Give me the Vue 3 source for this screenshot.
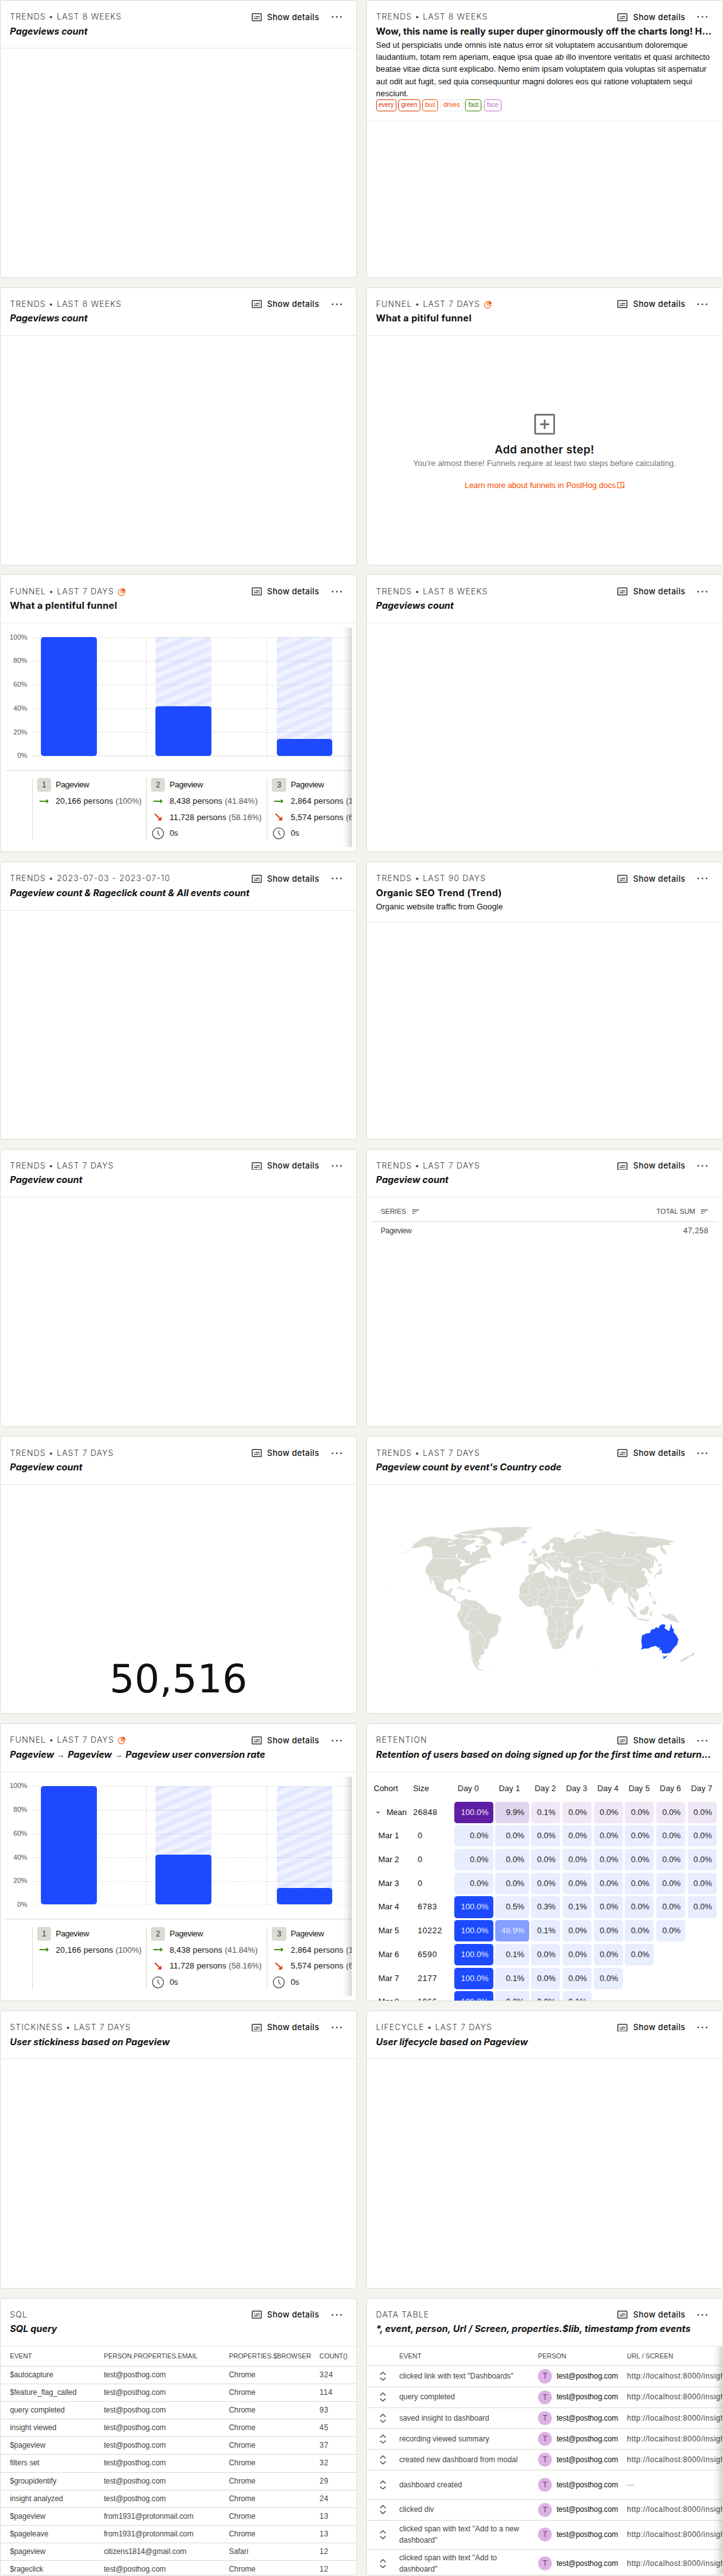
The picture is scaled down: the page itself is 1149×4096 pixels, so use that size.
<script setup>
const T7 = 'Trends • Last 7 days'
const T8 = 'Trends • Last 8 weeks'

const cards = [
  { kind: T8, title: 'Pageviews count', auto: true },
  {
    kind: T8,
    title: 'Wow, this name is really super duper ginormously off the charts long! H...',
    long: true,
    desc: [
      'Sed ut perspiciatis unde omnis iste natus error sit voluptatem accusantium doloremque',
      'laudantium, totam rem aperiam, eaque ipsa quae ab illo inventore veritatis et quasi architecto',
      'beatae vitae dicta sunt explicabo. Nemo enim ipsam voluptatem quia voluptas sit aspernatur',
      'aut odit aut fugit, sed quia consequuntur magni dolores eos qui ratione voluptatem sequi',
      'nesciunt.'
    ],
    tags: [
      { text: 'every', tone: 'danger', w: 35 },
      { text: 'green', tone: 'danger', w: 37 },
      { text: 'bus', tone: 'orange', w: 27 },
      { text: 'drives', tone: 'plain', w: 39 },
      { text: 'fast', tone: 'success', w: 28 },
      { text: 'face', tone: 'purple', w: 31 }
    ]
  },
  { kind: T8, title: 'Pageviews count', auto: true },
  { kind: 'Funnel • Last 7 days', pie: true, title: 'What a pitiful funnel', body: 'empty' },
  { kind: 'Funnel • Last 7 days', pie: true, title: 'What a plentiful funnel', body: 'funnel' },
  { kind: T8, title: 'Pageviews count', auto: true },
  { kind: 'Trends • 2023-07-03 - 2023-07-10', title: 'Pageview count & Rageclick count & All events count', auto: true },
  { kind: 'Trends • Last 90 days', title: 'Organic SEO Trend (Trend)', desc: ['Organic website traffic from Google'] },
  { kind: T7, title: 'Pageview count', auto: true },
  { kind: T7, title: 'Pageview count', auto: true, body: 'series' },
  { kind: T7, title: 'Pageview count', auto: true, body: 'number' },
  { kind: T7, title: "Pageview count by event's Country code", auto: true, body: 'map' },
  { kind: 'Funnel • Last 7 days', pie: true, title: 'Pageview → Pageview → Pageview user conversion rate', auto: true, body: 'funnel' },
  { kind: 'Retention', title: 'Retention of users based on doing signed up for the first time and return...', auto: true, body: 'retention' },
  { kind: 'Stickiness • Last 7 days', title: 'User stickiness based on Pageview', auto: true },
  { kind: 'Lifecycle • Last 7 days', title: 'User lifecycle based on Pageview', auto: true },
  { kind: 'SQL', title: 'SQL query', auto: true, body: 'sql' },
  { kind: 'Data table', title: '*, event, person, Url / Screen, properties.$lib, timestamp from events', auto: true, long: true, body: 'data' }
]
// Keeps the arrows as separate parts so they can be set upright and light.
const parts = (title) => title.split(/(→)/)

const ticks = ['100%', '80%', '60%', '40%', '20%', '0%']
const steps = [
  { n: 1, w: 196.5, share: 100, ok: '20,166 persons', okPct: '(100%)' },
  { n: 2, w: 209, share: 41.84, ok: '8,438 persons', okPct: '(41.84%)', lost: '11,728 persons', lostPct: '(58.16%)' },
  { n: 3, w: 209, share: 14.2, ok: '2,864 persons', okPct: '(14.20%)', lost: '5,574 persons', lostPct: '(66.06%)' }
]

const days = [0, 1, 2, 3, 4, 5, 6, 7]
const z = '0.0%'
const cohorts = [
  { name: 'Mean', size: '26848', mean: true, v: ['100.0%', '9.9%', '0.1%', z, z, z, z, z] },
  { name: 'Mar 1', size: '0', v: [z, z, z, z, z, z, z, z] },
  { name: 'Mar 2', size: '0', v: [z, z, z, z, z, z, z, z] },
  { name: 'Mar 3', size: '0', v: [z, z, z, z, z, z, z, z] },
  { name: 'Mar 4', size: '6783', v: ['100.0%', '0.5%', '0.3%', '0.1%', z, z, z, z] },
  { name: 'Mar 5', size: '10222', v: ['100.0%', '48.9%', '0.1%', z, z, z, z] },
  { name: 'Mar 6', size: '6590', v: ['100.0%', '0.1%', z, z, z, z] },
  { name: 'Mar 7', size: '2177', v: ['100.0%', '0.1%', z, z, z] },
  { name: 'Mar 8', size: '1066', v: ['100.0%', z, z, '0.1%'] }
]
const tone = (v, mean) => {
  const n = parseFloat(v)
  const level = n >= 99 ? 'full' : n > 40 ? 'mid' : n > 5 ? 'low' : 'none'
  return (mean ? 'mean-' : 'cell-') + level
}

const sqlRows = [
  ['$autocapture', 'test@posthog.com', 'Chrome', '324'],
  ['$feature_flag_called', 'test@posthog.com', 'Chrome', '114'],
  ['query completed', 'test@posthog.com', 'Chrome', '93'],
  ['insight viewed', 'test@posthog.com', 'Chrome', '45'],
  ['$pageview', 'test@posthog.com', 'Chrome', '37'],
  ['filters set', 'test@posthog.com', 'Chrome', '32'],
  ['$groupidentify', 'test@posthog.com', 'Chrome', '29'],
  ['insight analyzed', 'test@posthog.com', 'Chrome', '24'],
  ['$pageview', 'from1931@protonmail.com', 'Chrome', '13'],
  ['$pageleave', 'from1931@protonmail.com', 'Chrome', '13'],
  ['$pageview', 'citizens1814@gmail.com', 'Safari', '12'],
  ['$rageclick', 'test@posthog.com', 'Chrome', '12']
]

const url = 'http://localhost:8000/insights'
const events = [
  { name: ['clicked link with text "Dashboards"'], url },
  { name: ['query completed'], url },
  { name: ['saved insight to dashboard'], url },
  { name: ['recording viewed summary'], url },
  { name: ['created new dashboard from modal'], url },
  { name: ['dashboard created'], tall: true },
  { name: ['clicked div'], url },
  { name: ['clicked span with text "Add to a new', 'dashboard"'], tall: true, url },
  { name: ['clicked span with text "Add to', 'dashboard"'], tall: true, url }
]

const land = [
  // North America
  'M294 77L264 71L230 73L202 82L192 90L210 93L176 96L186 101L158 110L168 114L150 125L172 130L196 122L222 116L244 124L258 132L256 150L262 178L256 190L242 204L230 226L224 240L226 262L238 272L244 292L252 314L258 326L252 300L248 280L262 296L276 322L278 340L296 358L322 366L342 378L362 388L372 402L390 412L404 414L400 408L388 410L378 398L376 378L356 372L352 362L364 340L350 342L342 354L324 352L314 334L320 304L336 290L362 292L374 286L392 292L398 314L404 308L402 284L412 272L436 256L438 242L452 232L470 222L486 214L512 206L540 198L536 192L506 200L500 192L512 182L540 178L562 182L556 160L544 152L542 126L524 114L508 118L506 136L490 138L484 150L468 148L462 164L452 170L454 150L432 140L420 132L436 114L460 108L484 94L470 84L452 92L440 82L420 86L396 80L368 88L340 80L318 80Z',
  'M370 62L400 56L424 66L436 78L404 80L376 72Z',
  'M420 66L448 60L480 64L500 74L478 78L446 78Z',
  'M500 66L532 72L560 90L566 102L552 106L536 116L520 104L502 104L528 94L504 80Z',
  'M398 50L440 42L500 34L560 26L600 24L560 32L520 44L470 54L430 56Z',
  'M448 52L500 46L530 50L500 60L470 60Z',
  'M486 116L500 118L498 126L484 126Z',
  // Greenland
  'M540 32L596 24L650 22L704 20L770 24L742 32L750 44L730 58L736 66L700 78L718 80L684 92L658 98L634 108L624 120L612 112L608 100L620 84L618 66L604 48L578 44Z',
  // Caribbean
  'M382 338L400 330L422 342L430 346L412 344L396 336Z',
  'M436 348L446 346L464 354L446 356Z',
  // South America
  'M404 414L412 402L436 392L444 400L486 404L500 418L522 430L534 446L544 464L566 472L590 474L612 486L616 500L600 526L598 560L588 584L566 592L556 606L552 626L540 652L520 654L528 668L522 680L506 684L508 698L496 712L502 728L492 742L500 756L526 766L500 760L480 744L468 720L460 690L456 650L450 600L448 560L424 544L410 526L396 498L386 484L390 462L406 446Z',
  // Africa
  'M766 262L800 258L836 248L844 262L842 272L874 286L884 288L890 274L912 276L950 288L962 308L976 346L990 376L1004 398L1044 392L1036 420L1012 448L992 472L984 492L986 520L990 544L964 566L962 596L946 612L944 628L924 648L884 654L874 632L862 596L850 556L860 526L856 490L838 472L836 444L828 436L808 424L780 430L752 434L728 412L712 392L706 376L712 360L710 336L720 316L736 300L744 280Z',
  'M1036 528L1038 544L1026 574L1018 600L1006 600L1002 580L1010 552Z',
  // Eurasia
  'M766 262L754 248L756 214L790 216L802 212L796 200L778 186L794 184L816 176L830 162L846 158L862 156L888 152L900 136L882 140L880 124L890 110L874 98L864 110L868 130L856 142L846 138L840 132L826 134L828 120L848 106L870 86L896 72L912 74L950 88L930 92L948 104L940 110L956 100L990 84L1036 80L1060 90L1040 66L1070 68L1096 58L1130 48L1170 44L1200 58L1250 62L1290 70L1340 68L1400 76L1460 84L1510 98L1480 102L1492 112L1456 114L1444 122L1462 140L1470 168L1454 154L1440 136L1438 112L1412 126L1370 128L1362 152L1390 164L1406 180L1404 214L1396 232L1376 238L1386 246L1394 262L1380 256L1370 240L1350 230L1338 244L1362 250L1354 268L1372 292L1370 316L1350 330L1318 340L1312 352L1326 372L1328 392L1312 406L1300 390L1284 380L1280 402L1296 420L1306 448L1292 436L1276 404L1272 374L1266 358L1254 364L1246 342L1228 330L1210 346L1190 368L1186 398L1176 412L1162 388L1150 358L1146 340L1130 328L1110 312L1092 316L1070 312L1042 302L1028 288L1038 308L1058 322L1064 312L1082 334L1064 360L1034 378L1006 386L992 354L974 322L960 296L964 274L962 256L932 256L916 238L924 228L910 234L908 244L898 254L888 238L870 218L850 200L838 204L866 232L862 246L856 230L826 208L802 220L790 244Z',
  // Middle East and Caucasus
  'M918 230L950 226L990 224L1006 232L1000 254L960 258L924 250Z',
  // Britain and Ireland
  'M776 134L790 138L790 150L804 164L798 174L778 174L786 162L776 150Z',
  'M762 156L774 152L772 166L758 168Z',
  // Arctic islands
  'M990 66L1006 52L1030 46L1010 54L998 64L1004 72L996 74Z',
  'M1096 30L1130 36L1146 42L1120 42Z',
  'M1266 50L1310 52L1290 54Z',
  // Japan and Sakhalin
  'M1404 164L1420 188L1430 214L1412 190Z',
  'M1428 214L1448 214L1438 224L1430 226Z',
  'M1438 232L1448 250L1444 262L1420 266L1412 272L1416 262L1436 250Z',
  'M1410 272L1418 278L1412 280Z',
  // South-East Asia
  'M1264 428L1284 444L1312 472L1318 490L1300 484L1284 460Z',
  'M1314 494L1346 496L1382 504L1376 508L1334 502Z',
  'M1332 456L1352 446L1368 428L1380 440L1370 472L1350 476L1336 470Z',
  'M1384 462L1404 454L1390 466L1398 482L1386 478Z',
  'M1382 354L1392 366L1390 380L1382 368Z',
  'M1398 404L1414 406L1416 424L1402 416Z',
  'M1448 468L1468 480L1490 468L1520 490L1534 516L1500 506L1466 490L1454 482Z',
  'M1188 406L1196 418L1190 424Z',
  'M1376 320L1380 318L1378 332Z',
  // New Zealand
  'M1540 718L1556 704L1590 684L1588 694L1556 716Z',
  'M1594 688L1606 672L1618 672L1604 690Z'
]
const borders = [
  'M296 77L246 124M262 184H392L414 196',
  'M238 274L262 280L290 278L312 300L318 308M340 370L354 360M356 378L374 376',
  'M418 402L416 420L450 430L460 450L440 456L444 484L424 494L430 516L450 518L466 516L490 546L506 556L510 576L528 598L526 620L542 640M504 430L500 446L480 448L462 446M390 458L414 460L400 486L388 488M450 518L450 546L462 584L454 600L462 690L490 744M462 584L484 584L490 570L510 568M510 582L530 606M526 622L520 640L524 656',
  'M766 262L784 266L756 294L730 304M756 294L812 350L864 330L840 300L838 250M760 318L764 370L712 374M812 350L804 374L772 386L748 404M864 330L868 356L856 384L810 384L804 420M912 276L912 346L868 330M912 334H966M904 344L900 400L880 420L862 444L840 444M908 400L956 404L970 366L984 362M970 366L986 380L1028 410L996 438L960 436L946 404M900 400L926 432L960 436L946 460L940 494M996 438L994 466L984 480M864 432H906L940 440M880 432L872 474L852 490M874 492L900 500L902 552L930 556L952 544L932 506L940 494L964 512L986 522M850 556L900 558M902 558L890 616L866 618M890 600L920 602L948 586L962 566M920 626L930 620L934 628L924 632ZM780 400L780 430M794 400L800 426M838 470L862 472L860 448',
  'M1002 186L1000 176L1050 174L1056 158L1090 150L1130 152L1170 182L1184 178L1220 184L1260 180L1308 184L1314 160L1352 174L1388 190L1392 230M1174 184L1204 210L1260 220L1300 218L1330 196L1308 184M1170 182L1160 214L1130 220L1140 238L1154 252L1160 276L1190 298L1240 304L1256 296L1270 330L1286 342L1300 334L1312 340M1048 204L1080 214L1130 238L1112 254L1096 234L1050 220M1004 236L1050 250L1080 256L1086 300L1092 312M1080 256L1110 250L1148 248L1130 300L1110 310M1140 262L1150 284L1136 320M1190 298L1230 310L1228 330M1268 336L1272 380M1286 342L1300 366L1322 376M1300 366L1286 378',
  'M962 280L980 250L1006 252M980 254L1000 280L1022 292M960 296L984 284M1004 374L1010 362L1056 354L1062 336M984 362L1010 362',
  'M900 72L910 100L906 116M868 92L850 120M860 156L866 176L896 178L902 154M902 154L936 150L926 170L968 182L960 200M896 178L920 170M830 162L820 184L830 196L866 186L896 190L916 194L920 212L894 214L888 198M850 176L852 190M866 200L886 214L888 236M760 222L758 246',
  'M1492 470L1492 508'
]
const australia =
  'M1338 656L1344 640L1340 612L1344 582L1366 572L1384 570L1392 552L1410 548L1416 538L1430 546L1434 532L1450 524L1466 528L1460 544L1484 560L1490 542L1495 520L1500 544L1508 550L1508 568L1520 580L1532 602L1526 628L1506 650L1490 672L1466 676L1448 674L1444 656L1432 660L1438 644L1428 646L1416 636L1392 642L1376 650L1356 650Z'
</script>

<template>
  <main class="dashboard">
    <article v-for="(c, i) in cards" :key="i" class="card">
      <header class="meta">
        <div class="meta-top">
          <h5>{{ c.kind }}</h5>
          <svg v-if="c.pie" class="pie" viewBox="0 0 14 14">
            <path d="M6.3 1.7A5.6 5.6 0 1 0 12.3 7.9H6.3Z" fill="none" stroke="currentColor" stroke-width="1.2" />
            <path d="M8 .4A6 6 0 0 1 13.7 6.1H8Z" fill="currentColor" />
          </svg>
          <div class="controls">
            <svg class="details" viewBox="0 0 18 14">
              <rect x=".9" y=".9" width="15.8" height="12.2" rx="1" fill="none" stroke="currentColor" stroke-width="1.7" />
              <path d="M4 6H5.4M6.8 6H13.8M4 9.3H10.8M12.2 9.3H13.8" stroke="currentColor" stroke-width="1.5" />
            </svg>
            <span class="show">Show details</span>
            <svg class="dots" viewBox="0 0 18 4">
              <circle cx="1.7" cy="2" r="1.45" /><circle cx="9" cy="2" r="1.45" /><circle cx="16.2" cy="2" r="1.45" />
            </svg>
          </div>
        </div>
        <h4 :class="{ auto: c.auto, long: c.long }"><template v-for="(p, j) in parts(c.title)" :key="j"><span v-if="p === '→'" class="arrow">{{ p }}</span><template v-else>{{ p }}</template></template></h4>
        <div v-if="c.desc" class="desc">
          <div v-for="line in c.desc" :key="line">{{ line }}</div>
        </div>
        <div v-if="c.tags" class="tags">
          <span v-for="t in c.tags" :key="t.text" class="tag" :class="t.tone" :style="{ width: t.w + 'px' }">{{ t.text }}</span>
        </div>
      </header>

      <section v-if="c.body === 'empty'" class="empty">
        <svg viewBox="0 0 36 36" class="plus">
          <rect x="1.5" y="1.5" width="33" height="33" rx="1.5" fill="none" stroke="currentColor" stroke-width="3" />
          <path d="M18 10V26M10 18H26" stroke="currentColor" stroke-width="3" />
        </svg>
        <h2>Add another step!</h2>
        <p>You're almost there! Funnels require at least two steps before calculating.</p>
        <a>
          <span>Learn more about funnels in PostHog docs</span>
          <svg viewBox="0 0 12 12"><path d="M7 10.6H.6V1H11.4V6M6.4 1V10.6M11.6 7.4V11M11.6 7.6H9M11.4 7.8L8.2 11" fill="none" stroke="currentColor" stroke-width="1.1" /></svg>
        </a>
      </section>

      <section v-else-if="c.body === 'funnel'" class="funnel">
        <div class="chart">
          <div class="axis"><span v-for="t in ticks" :key="t">{{ t }}</span></div>
          <div class="plot">
            <div v-for="s in steps" :key="s.n" class="col" :style="{ width: s.w + 'px' }">
              <div class="bar"><div class="fill" :style="{ height: s.share + '%' }"></div></div>
            </div>
            <svg class="grid" width="552" height="206" viewBox="0 0 552 206">
              <path v-for="k in 5" :key="k" :d="`M0 ${(k - 1) * 41 + 0.5}H552`" stroke-dasharray="3 2" />
              <path d="M0 205.5H552" />
            </svg>
          </div>
        </div>
        <div class="legend">
          <div v-for="s in steps" :key="s.n" class="step" :style="{ width: s.w + 'px' }">
            <div class="line"><span class="badge">{{ s.n }}</span><span class="step-name">Pageview</span></div>
            <div class="line">
              <svg class="ico green" viewBox="0 0 24 24"><path d="M4 12H17" stroke="currentColor" stroke-width="2" /><path d="M16 8L20 12L16 16Z" fill="currentColor" /></svg>
              <span class="persons">{{ s.ok }} <i>{{ s.okPct }}</i></span>
            </div>
            <div v-if="s.lost" class="line">
              <svg class="ico red" viewBox="0 0 24 24"><path d="M6.5 6.5L15 15" stroke="currentColor" stroke-width="2" /><path d="M18 11V18H11Z" fill="currentColor" /></svg>
              <span class="persons">{{ s.lost }} <i>{{ s.lostPct }}</i></span>
            </div>
            <div v-if="s.lost" class="line">
              <svg class="ico" viewBox="0 0 24 24" fill="none" stroke="currentColor" stroke-width="1.3"><circle cx="12" cy="12" r="9.5" /><path d="M12 7V12L15 15.5" /></svg>
              <span>0s</span>
            </div>
          </div>
        </div>
        <div class="shade"></div>
      </section>

      <section v-else-if="c.body === 'series'" class="series">
        <div class="series-head">
          <span>Series</span>
          <svg viewBox="0 0 12 8"><path d="M0 1H12M0 4H8M0 7H4" stroke="currentColor" stroke-width="1.2" /></svg>
          <span class="right">Total sum</span>
          <svg viewBox="0 0 12 8"><path d="M0 1H12M0 4H8M0 7H4" stroke="currentColor" stroke-width="1.2" /></svg>
        </div>
        <div class="series-row"><span class="event-name">Pageview</span><span class="count">47,258</span></div>
      </section>

      <section v-else-if="c.body === 'number'" class="number">50,516</section>

      <section v-else-if="c.body === 'map'" class="map">
        <svg viewBox="-81 -198 1842 1185">
          <path v-for="d in land" :key="d" :d="d" fill="#dadcd3" stroke="#dadcd3" stroke-width="2" stroke-linejoin="round" />
          <g fill="#fff">
            <path d="M336 96L362 90L366 96L342 102ZM338 118L380 110L384 114L346 124ZM384 158L390 156L386 180L378 172Z" />
            <path d="M390 184L424 194L436 214L412 224L396 224L410 204ZM428 212L460 206L450 216L426 222Z" />
            <path d="M924 208L930 194L944 208L962 206L982 218L970 228L936 230L922 222Z" />
            <path d="M1008 198L1026 192L1032 204L1022 212L1042 232L1034 250L1018 244L1020 222Z" />
            <path d="M1120 200L1128 194L1150 196L1128 204ZM1250 146L1258 150L1252 170L1238 172L1252 160Z" />
            <path d="M948 460L962 456L962 470L950 472Z" />
          </g>
          <path v-for="d in borders" :key="d" :d="d" fill="none" stroke="#f8f9f6" stroke-width="2.5" stroke-linejoin="round" />
          <path d="M718 98L730 94L748 96L746 102L732 106L720 104Z" fill="#d2dbff" />
          <path :d="australia" fill="#1d4aff" />
          <path d="M1454 690L1462 692L1476 684L1468 696L1454 704Z" fill="#1d4aff" />
          <path d="M94 158L124 148L160 132M12 334L20 336M28 346h4v3h-4zM1100 736h6M542 748h10M1384 380L1402 390L1412 404" stroke="#dadcd3" stroke-width="2" fill="none" />
        </svg>
      </section>

      <section v-else-if="c.body === 'retention'" class="retention">
        <div class="ret-row ret-head">
          <span class="name">Cohort</span><span class="size">Size</span>
          <span v-for="d in days" :key="d" class="cell">Day {{ d }}</span>
        </div>
        <div v-for="r in cohorts" :key="r.name" class="ret-row" :class="{ mean: r.mean }">
          <span class="name">
            <svg v-if="r.mean" viewBox="0 0 6 4"><path d="M.4 .5L3 3.2L5.6 .5" fill="none" stroke="currentColor" stroke-width="1.1" /></svg>{{ r.name }}
          </span>
          <span class="size digits">{{ r.size }}</span>
          <span v-for="(v, k) in r.v" :key="k" class="cell" :class="tone(v, r.mean)">{{ v }}</span>
        </div>
      </section>

      <section v-else-if="c.body === 'sql'" class="sql">
        <div class="sql-row sql-head"><span>Event</span><span>Person.properties.email</span><span>Properties.$browser</span><span>Count()</span></div>
        <div v-for="(r, k) in sqlRows" :key="k" class="sql-row"><span v-for="(v, j) in r" :key="j" :class="{ count: j === 3 }">{{ v }}</span></div>
      </section>

      <section v-else-if="c.body === 'data'" class="data">
        <div class="data-row data-head"><span></span><span>Event</span><span>Person</span><span>URL / Screen</span></div>
        <div v-for="(e, k) in events" :key="k" class="data-row" :class="{ tall: e.tall }">
          <svg viewBox="0 0 12 16"><path d="M1.2 5.5L6 1L10.8 5.5M1.2 10.5L6 15L10.8 10.5" fill="none" stroke="currentColor" stroke-width="1.4" /></svg>
          <div class="event"><div v-for="n in e.name" :key="n">{{ n }}</div></div>
          <div class="person"><b>T</b><span>test@posthog.com</span></div>
          <span v-if="e.url" class="url">{{ e.url }}</span><span v-else class="dash">—</span>
        </div>
        <div class="shade"></div>
      </section>
    </article>
  </main>
</template>

<style>
html,
body {
  margin: 0;
  background: #f3f4ef;
  overflow: hidden;
}
</style>

<style scoped>
.dashboard {
  zoom: 0.9208;
  width: 1247.8px;
  display: grid;
  grid-template-columns: 1fr 1fr;
  grid-auto-rows: 480px;
  gap: 16px;
  background: #f3f4ef;
  color: #111;
  font: 14px/21px 'Liberation Sans', Arial, sans-serif;
}
.card {
  box-sizing: border-box;
  min-width: 0;
  display: flex;
  flex-direction: column;
  position: relative;
  border: 1px solid #dadcd3;
  border-radius: 5px;
  background: #fff;
  overflow: hidden;
}
.meta {
  flex: none;
  padding: 16px;
  border-bottom: 1px solid #e5e7e6;
}
.meta-top {
  display: flex;
  align-items: center;
  height: 25px;
}
h5 {
  margin: 0;
  font: 300 14px/24px Inter, sans-serif;
  letter-spacing: 1.06px;
  text-transform: uppercase;
  color: #3a3a3a;
}
.pie {
  width: 14px;
  height: 14px;
  margin: 1px 0 0 6px;
  color: #f54e00;
}
.controls {
  display: flex;
  align-items: center;
  margin-left: auto;
  margin-right: 9px;
  color: #3d3d3d;
}
.details {
  width: 18px;
  height: 14px;
}
.show {
  margin: 1px 21px 0 9px;
  font: 500 14px/24px Inter, sans-serif;
  letter-spacing: 0.39px;
  color: #111;
}
.dots {
  width: 18px;
  height: 4px;
  fill: #3d3d3d;
}
h4 {
  margin: 0;
  font: 700 16px/25px Inter, sans-serif;
  letter-spacing: 0.35px;
  color: #111;
  white-space: nowrap;
}
h4.auto {
  font-style: italic;
  letter-spacing: 0;
}
h4.long {
  letter-spacing: 0.1px;
}
.arrow {
  display: inline-block;
  width: 16px;
  text-align: center;
  font: 400 14px/20px 'Liberation Sans', sans-serif;
}
.desc {
  white-space: nowrap;
}
.tags {
  display: flex;
  gap: 4px;
}
.tag {
  box-sizing: border-box;
  height: 20px;
  border: 1px solid currentColor;
  border-radius: 4px;
  text-align: center;
  font-size: 11px;
  line-height: 18px;
  letter-spacing: -0.1px;
}
.danger { color: #db3707; }
.orange { color: #f54e00; }
.plain { color: #f54e00; border-color: #e5e7eb; }
.success { color: #388600; }
.purple { color: #c278cf; }

.empty {
  display: flex;
  flex-direction: column;
  align-items: center;
  padding-top: 134px;
}
.plus {
  width: 36px;
  height: 36px;
  color: #707070;
}
.empty h2 {
  margin: 15px 0 0;
  font: 600 19px/24px Inter, sans-serif;
  letter-spacing: 0.45px;
}
.empty p {
  margin: 1px 0 16px;
  color: #757575;
}
.empty a {
  display: flex;
  align-items: center;
  gap: 3px;
  letter-spacing: -0.1px;
  color: #f54e00;
}
.empty a svg {
  width: 12px;
  height: 12px;
}

.funnel {
  position: relative;
  margin: 8px;
  height: 379px;
  overflow: hidden;
}
.chart {
  display: flex;
  height: 246px;
  border-bottom: 1px solid #dadcd3;
}
.axis {
  flex: none;
  width: 38px;
  margin-right: 8px;
  padding-top: 6px;
  text-align: right;
  font-size: 12px;
  color: #555;
}
.axis span {
  display: block;
  height: 41px;
  line-height: 20px;
}
.plot {
  position: relative;
  display: flex;
  flex: none;
  margin-top: 16px;
  height: 206px;
}
.grid {
  position: absolute;
  top: 0;
  left: 0;
  fill: none;
  stroke: #1e2300;
  stroke-opacity: 0.16;
  z-index: 1;
}
.col {
  box-sizing: border-box;
  flex: none;
  padding-left: 16px;
}
.col + .col {
  border-left: 1px dashed #dadcd3;
}
.bar {
  width: 96px;
  height: 205px;
  border-radius: 5px;
  display: flex;
  align-items: flex-end;
  background: repeating-linear-gradient(-22.5deg, #f0f3ff 0, #f0f3ff 8px, #e1e7ff 8px, #e1e7ff 16px);
}
.fill {
  position: relative;
  z-index: 2;
  width: 100%;
  border-radius: 5px;
  background: #1d4aff;
}
.legend {
  display: flex;
  margin: 12px 0 0 46px;
  height: 108px;
}
.step {
  box-sizing: border-box;
  flex: none;
  border-left: 1px solid #dadcd3;
  padding-left: 8px;
}
.line {
  display: flex;
  align-items: center;
  gap: 8px;
  height: 24px;
  margin-bottom: 4px;
  white-space: nowrap;
}
.line i {
  font-style: normal;
  letter-spacing: 0;
  color: #555;
}
.step-name {
  letter-spacing: -0.4px;
}
.persons {
  letter-spacing: 0.2px;
}
.badge {
  width: 24px;
  height: 24px;
  border-radius: 4px;
  background: #dadcd3;
  text-align: center;
  line-height: 24px;
  font-size: 13px;
  color: #333;
}
.ico {
  width: 24px;
  height: 24px;
  color: #444;
}
.green { color: #388600; }
.red { color: #db3707; }
.shade {
  position: absolute;
  top: 0;
  right: 0;
  bottom: 0;
  width: 16px;
  z-index: 3;
  background: linear-gradient(to right, rgba(0, 0, 0, 0), rgba(0, 0, 0, 0.05) 50%, rgba(0, 0, 0, 0.17));
}

.series {
  margin: 8px;
  color: #444;
  font-size: 13px;
}
.series-head {
  display: flex;
  align-items: center;
  height: 33px;
  padding: 0 17px 0 16px;
  border-bottom: 1px solid #dadcd3;
  font-size: 12px;
  text-transform: uppercase;
}
.series-head svg {
  width: 12px;
  height: 8px;
  margin-left: 10px;
}
.right {
  margin-left: auto;
}
.series-row {
  display: flex;
  justify-content: space-between;
  padding: 5px 16px;
}
.event-name {
  letter-spacing: -0.36px;
}
.count {
  letter-spacing: 0.6px;
}

.number {
  display: flex;
  align-items: flex-end;
  justify-content: center;
  height: 369.5px;
  font: 68px/68px 'DejaVu Sans', sans-serif;
}

.map svg {
  display: block;
  width: 614px;
  height: 395px;
}

.retention {
  padding-left: 12px;
  padding-top: 8px;
  white-space: nowrap;
}
.ret-row {
  display: grid;
  grid-template-columns: 68px 63px 67px 58px 50px 50px 50px 50px 50px 50px;
  column-gap: 4px;
  height: 37px;
  line-height: 37px;
  margin-bottom: 4px;
}
.ret-head {
  height: 43px;
  line-height: 42px;
  margin-bottom: 0;
}
.name {
  padding-left: 8px;
}
.size {
  padding-left: 4px;
}
.digits {
  letter-spacing: 0.65px;
}
.ret-head .name,
.mean .name {
  padding-left: 0;
}
.mean .name {
  display: flex;
  align-items: center;
  gap: 12px;
  padding-left: 4px;
}
.name svg {
  width: 6px;
  height: 4px;
}
.ret-head .size,
.mean .size {
  padding-left: 0;
  margin-left: -4px;
}
.cell {
  border-radius: 5px;
  padding-right: 8px;
  text-align: right;
  color: #222;
}
.ret-head .cell {
  text-align: left;
  padding: 0 0 0 6px;
}
.cell-none { background: #e8edff; }
.cell-mid { background: #859eff; color: #e8edff; }
.cell-full { background: #1d4aff; color: #e8edff; }
.mean-none { background: #efe8f6; }
.mean-low { background: #e0d4ee; }
.mean-full { background: #5f1ea3; color: #efe8f6; }

.sql {
  color: #444;
  font-size: 13px;
  letter-spacing: -0.1px;
}
.sql-row {
  display: grid;
  grid-template-columns: 162px 216px 156.5px 60px;
  padding-left: 16px;
  height: 29.5px;
  line-height: 30px;
  border-bottom: 1px solid #dadcd3;
}
.sql-head {
  height: 33.3px;
  line-height: 34px;
  font-size: 11.5px;
  letter-spacing: -0.05px;
  text-transform: uppercase;
}

.data {
  position: relative;
  width: 614px;
  height: 396px;
  overflow: hidden;
  color: #444;
  font-size: 13px;
  line-height: 20px;
}
.data-row {
  display: grid;
  grid-template-columns: 40px 239.5px 153.5px 240px;
  align-items: center;
  padding-left: 16px;
  height: 35px;
  border-bottom: 1px solid #dadcd3;
}
.data-head {
  height: 33px;
  font-size: 11.5px;
  letter-spacing: 0;
  text-transform: uppercase;
}
.tall {
  height: 49px;
}
.data-row svg {
  width: 12px;
  height: 16px;
  margin-left: 6px;
}
.person {
  display: flex;
  align-items: center;
  gap: 8px;
  letter-spacing: -0.16px;
  color: #111;
}
.person b {
  width: 24px;
  height: 24px;
  border-radius: 50%;
  background: #dcb1e3;
  color: #6f3680;
  font-weight: 400;
  text-align: center;
  line-height: 24px;
}
.url {
  letter-spacing: 0.55px;
}
.dash {
  color: #aaa;
}
</style>
